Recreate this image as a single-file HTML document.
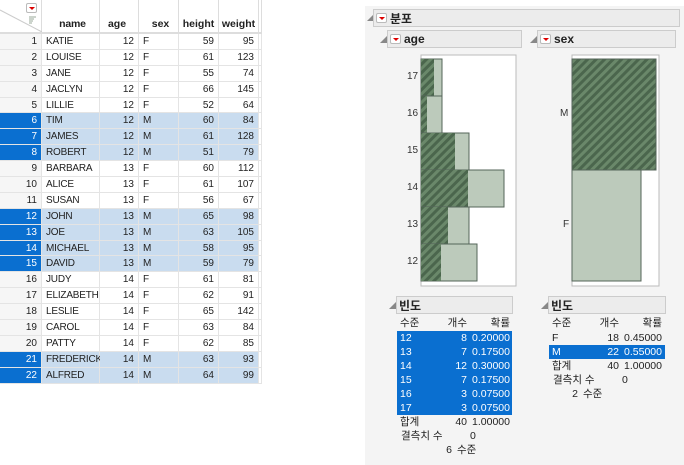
<!DOCTYPE html>
<html><head><meta charset="utf-8"><style>
*{margin:0;padding:0;box-sizing:border-box}
body{width:684px;height:465px;background:#fff;position:relative;overflow:hidden;font-family:"Segoe UI","Liberation Sans","Noto Sans CJK KR",sans-serif;font-size:10px;color:#222}
.tbl{position:absolute;left:0;top:0;width:262px}
.hdr{height:34px;position:relative;border-bottom:2px solid #ddd;display:flex}
.hdr div{border-right:1px solid #ddd;height:32px;font-weight:bold;font-size:10.5px;display:flex;align-items:flex-end;justify-content:center;padding-bottom:2px}
.row{height:15.9px;display:flex;border-bottom:1px solid #e4e4e4}
.row div{border-right:1px solid #e4e4e4;line-height:15px;white-space:nowrap;overflow:visible}
.c0{width:42px;text-align:right;padding-right:4px;background:#f6f6f6}
.c1{width:58px;padding-left:4px;letter-spacing:-0.2px}
.c2{width:39px;text-align:right;padding-right:4px}
.c3{width:40px;padding-left:4px}
.c4{width:40px;text-align:right;padding-right:4px}
.c5{width:40px;text-align:right;padding-right:4px}
.c6{width:3px}
.sel .c0{background:#0a6fd0;color:#fff}
.sel div{background:#c9dcef}
.sel .c6{background:#fff}
.rp{position:absolute;left:365px;top:6px;width:319px;height:459px;background:#f4f4f4}
.bar{position:absolute;background:#ececec;border:1px solid #ccc;font-weight:bold;font-size:12px;display:flex;align-items:center;padding-left:2px}
.tri{position:absolute;font-size:8px;color:#888}
.dd{display:inline-block;width:11px;height:10px;border:1px solid #bbb;background:#fff;position:relative;margin-right:3px;border-radius:2px}
.dd:after{content:"";position:absolute;left:2px;top:3px;border-left:3px solid transparent;border-right:3px solid transparent;border-top:3px solid #d00}
.abs{position:absolute}
.lab{position:absolute;font-size:10px;color:#333}
.ft{position:absolute;font-size:10.5px;line-height:14px}
.ft .r{display:flex}
.ft .r span{display:inline-block}
.blue{background:#0a6fd0;color:#fff}
</style></head><body>
<div class="tbl">
<div class="hdr">
<div class="c0" style="background:#fff;position:relative;border-right:1px solid #ddd"><span class="dd" style="position:absolute;left:26px;top:3px"></span><svg style="position:absolute;left:0;top:0" width="42" height="32"><line x1="0" y1="10" x2="42" y2="32" stroke="#ccc"/><g stroke="#9a9" stroke-width="1"><line x1="29" y1="17" x2="36" y2="17"/><line x1="29" y1="19" x2="34" y2="19"/><line x1="29" y1="21" x2="33" y2="21"/><line x1="29" y1="23" x2="32" y2="23"/></g></svg></div>
<div class="c1">name</div><div class="c2" style="justify-content:center">age</div><div class="c3">sex</div><div class="c4" style="padding:0 0 2px">height</div><div class="c5" style="padding:0 0 2px">weight</div><div class="c6"></div>
</div>
<div class="row"><div class="c0">1</div><div class="c1">KATIE</div><div class="c2">12</div><div class="c3">F</div><div class="c4">59</div><div class="c5">95</div><div class="c6"></div></div>
<div class="row"><div class="c0">2</div><div class="c1">LOUISE</div><div class="c2">12</div><div class="c3">F</div><div class="c4">61</div><div class="c5">123</div><div class="c6"></div></div>
<div class="row"><div class="c0">3</div><div class="c1">JANE</div><div class="c2">12</div><div class="c3">F</div><div class="c4">55</div><div class="c5">74</div><div class="c6"></div></div>
<div class="row"><div class="c0">4</div><div class="c1">JACLYN</div><div class="c2">12</div><div class="c3">F</div><div class="c4">66</div><div class="c5">145</div><div class="c6"></div></div>
<div class="row"><div class="c0">5</div><div class="c1">LILLIE</div><div class="c2">12</div><div class="c3">F</div><div class="c4">52</div><div class="c5">64</div><div class="c6"></div></div>
<div class="row sel"><div class="c0">6</div><div class="c1">TIM</div><div class="c2">12</div><div class="c3">M</div><div class="c4">60</div><div class="c5">84</div><div class="c6"></div></div>
<div class="row sel"><div class="c0">7</div><div class="c1">JAMES</div><div class="c2">12</div><div class="c3">M</div><div class="c4">61</div><div class="c5">128</div><div class="c6"></div></div>
<div class="row sel"><div class="c0">8</div><div class="c1">ROBERT</div><div class="c2">12</div><div class="c3">M</div><div class="c4">51</div><div class="c5">79</div><div class="c6"></div></div>
<div class="row"><div class="c0">9</div><div class="c1">BARBARA</div><div class="c2">13</div><div class="c3">F</div><div class="c4">60</div><div class="c5">112</div><div class="c6"></div></div>
<div class="row"><div class="c0">10</div><div class="c1">ALICE</div><div class="c2">13</div><div class="c3">F</div><div class="c4">61</div><div class="c5">107</div><div class="c6"></div></div>
<div class="row"><div class="c0">11</div><div class="c1">SUSAN</div><div class="c2">13</div><div class="c3">F</div><div class="c4">56</div><div class="c5">67</div><div class="c6"></div></div>
<div class="row sel"><div class="c0">12</div><div class="c1">JOHN</div><div class="c2">13</div><div class="c3">M</div><div class="c4">65</div><div class="c5">98</div><div class="c6"></div></div>
<div class="row sel"><div class="c0">13</div><div class="c1">JOE</div><div class="c2">13</div><div class="c3">M</div><div class="c4">63</div><div class="c5">105</div><div class="c6"></div></div>
<div class="row sel"><div class="c0">14</div><div class="c1">MICHAEL</div><div class="c2">13</div><div class="c3">M</div><div class="c4">58</div><div class="c5">95</div><div class="c6"></div></div>
<div class="row sel"><div class="c0">15</div><div class="c1">DAVID</div><div class="c2">13</div><div class="c3">M</div><div class="c4">59</div><div class="c5">79</div><div class="c6"></div></div>
<div class="row"><div class="c0">16</div><div class="c1">JUDY</div><div class="c2">14</div><div class="c3">F</div><div class="c4">61</div><div class="c5">81</div><div class="c6"></div></div>
<div class="row"><div class="c0">17</div><div class="c1">ELIZABETH</div><div class="c2">14</div><div class="c3">F</div><div class="c4">62</div><div class="c5">91</div><div class="c6"></div></div>
<div class="row"><div class="c0">18</div><div class="c1">LESLIE</div><div class="c2">14</div><div class="c3">F</div><div class="c4">65</div><div class="c5">142</div><div class="c6"></div></div>
<div class="row"><div class="c0">19</div><div class="c1">CAROL</div><div class="c2">14</div><div class="c3">F</div><div class="c4">63</div><div class="c5">84</div><div class="c6"></div></div>
<div class="row"><div class="c0">20</div><div class="c1">PATTY</div><div class="c2">14</div><div class="c3">F</div><div class="c4">62</div><div class="c5">85</div><div class="c6"></div></div>
<div class="row sel"><div class="c0">21</div><div class="c1">FREDERICK</div><div class="c2">14</div><div class="c3">M</div><div class="c4">63</div><div class="c5">93</div><div class="c6"></div></div>
<div class="row sel"><div class="c0">22</div><div class="c1">ALFRED</div><div class="c2">14</div><div class="c3">M</div><div class="c4">64</div><div class="c5">99</div><div class="c6"></div></div>
</div>

<div class="rp"></div>
<span class="tri" style="left:367px;top:12px">◢</span>
<div class="bar" style="left:373px;top:9px;width:307px;height:18px"><span class="dd"></span>분포</div>
<span class="tri" style="left:380px;top:34px">◢</span>
<div class="bar" style="left:387px;top:30px;width:135px;height:18px"><span class="dd"></span>age</div>
<span class="tri" style="left:530px;top:34px">◢</span>
<div class="bar" style="left:537px;top:30px;width:139px;height:18px"><span class="dd"></span>sex</div>

<svg class="abs" style="left:0;top:0" width="684" height="465">
<defs><pattern id="h" width="6" height="6" patternUnits="userSpaceOnUse" patternTransform="rotate(45)"><rect width="6" height="6" fill="#6a886a"/><rect width="3" height="6" fill="#4b664d"/></pattern></defs>
<rect x="421" y="55" width="95" height="231" fill="#fff" stroke="#bbb"/>
<g stroke="#55655a" stroke-width="1">
<rect x="421" y="59" width="21" height="37" fill="#bccabb"/><rect x="421" y="59" width="13" height="37" fill="url(#h)" stroke="none"/>
<rect x="421" y="96" width="21" height="37" fill="#bccabb"/><rect x="421" y="96" width="6" height="37" fill="url(#h)" stroke="none"/>
<rect x="421" y="133" width="48" height="37" fill="#bccabb"/><rect x="421" y="133" width="34" height="37" fill="url(#h)" stroke="none"/>
<rect x="421" y="170" width="83" height="37" fill="#bccabb"/><rect x="421" y="170" width="47" height="37" fill="url(#h)" stroke="none"/>
<rect x="421" y="207" width="48" height="37" fill="#bccabb"/><rect x="421" y="207" width="27" height="37" fill="url(#h)" stroke="none"/>
<rect x="421" y="244" width="56" height="37" fill="#bccabb"/><rect x="421" y="244" width="20" height="37" fill="url(#h)" stroke="none"/>
</g>
<rect x="572" y="55" width="87" height="231" fill="#fff" stroke="#bbb"/>
<rect x="572" y="59" width="84" height="111" fill="url(#h)" stroke="#55655a"/>
<rect x="572" y="170" width="69" height="111" fill="#bccabb" stroke="#55655a"/>
</svg>
<div class="lab" style="left:407px;top:71px">17</div>
<div class="lab" style="left:407px;top:108px">16</div>
<div class="lab" style="left:407px;top:145px">15</div>
<div class="lab" style="left:407px;top:182px">14</div>
<div class="lab" style="left:407px;top:219px">13</div>
<div class="lab" style="left:407px;top:256px">12</div>
<div class="lab" style="left:560px;top:108px">M</div>
<div class="lab" style="left:563px;top:219px">F</div>

<span class="tri" style="left:389px;top:300px">◢</span>
<div class="bar" style="left:396px;top:296px;width:117px;height:18px">빈도</div>
<span class="tri" style="left:541px;top:300px">◢</span>
<div class="bar" style="left:548px;top:296px;width:118px;height:18px">빈도</div>

<div class="ft" style="left:397px;top:316px;width:115px">
<div class="r" style="height:15px"><span style="width:40px;padding-left:3px">수준</span><span style="width:30px;text-align:right">개수</span><span style="width:45px;text-align:right;padding-right:2px">확률</span></div>
<div class="blue">
<div class="r"><span style="width:40px;padding-left:3px">12</span><span style="width:30px;text-align:right">8</span><span style="width:45px;text-align:right;padding-right:2px">0.20000</span></div>
<div class="r"><span style="width:40px;padding-left:3px">13</span><span style="width:30px;text-align:right">7</span><span style="width:45px;text-align:right;padding-right:2px">0.17500</span></div>
<div class="r"><span style="width:40px;padding-left:3px">14</span><span style="width:30px;text-align:right">12</span><span style="width:45px;text-align:right;padding-right:2px">0.30000</span></div>
<div class="r"><span style="width:40px;padding-left:3px">15</span><span style="width:30px;text-align:right">7</span><span style="width:45px;text-align:right;padding-right:2px">0.17500</span></div>
<div class="r"><span style="width:40px;padding-left:3px">16</span><span style="width:30px;text-align:right">3</span><span style="width:45px;text-align:right;padding-right:2px">0.07500</span></div>
<div class="r"><span style="width:40px;padding-left:3px">17</span><span style="width:30px;text-align:right">3</span><span style="width:45px;text-align:right;padding-right:2px">0.07500</span></div>
</div>
<div class="r"><span style="width:40px;padding-left:3px">합계</span><span style="width:30px;text-align:right">40</span><span style="width:45px;text-align:right;padding-right:2px">1.00000</span></div>
<div class="r"><span style="width:73px;padding-left:4px">결측치 수</span><span>0</span></div>
<div class="r"><span style="width:60px;text-align:right;padding-right:5px">6</span><span>수준</span></div>
</div>

<div class="ft" style="left:549px;top:316px;width:116px">
<div class="r" style="height:15px"><span style="width:40px;padding-left:3px">수준</span><span style="width:30px;text-align:right">개수</span><span style="width:45px;text-align:right;padding-right:2px">확률</span></div>
<div class="r"><span style="width:40px;padding-left:3px">F</span><span style="width:30px;text-align:right">18</span><span style="width:45px;text-align:right;padding-right:2px">0.45000</span></div>
<div class="r blue"><span style="width:40px;padding-left:3px">M</span><span style="width:30px;text-align:right">22</span><span style="width:45px;text-align:right;padding-right:2px">0.55000</span></div>
<div class="r"><span style="width:40px;padding-left:3px">합계</span><span style="width:30px;text-align:right">40</span><span style="width:45px;text-align:right;padding-right:2px">1.00000</span></div>
<div class="r"><span style="width:73px;padding-left:4px">결측치 수</span><span>0</span></div>
<div class="r"><span style="width:34px;text-align:right;padding-right:5px">2</span><span>수준</span></div>
</div>
</body></html>
